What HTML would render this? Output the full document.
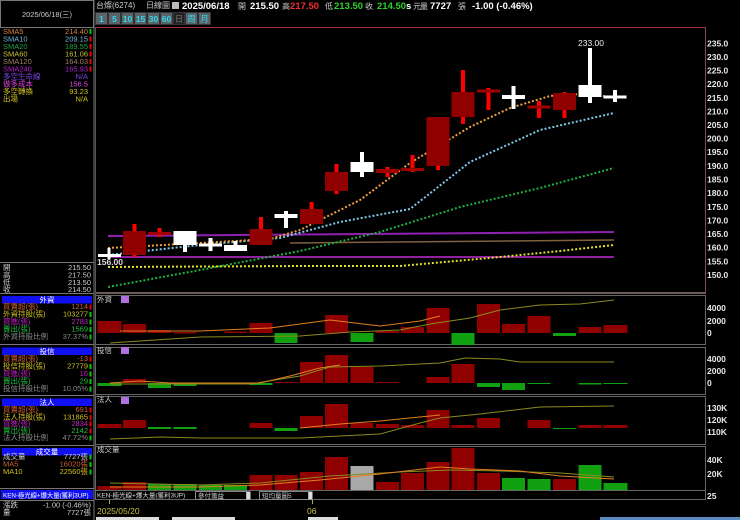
<!DOCTYPE html>
<html><head><meta charset="utf-8"><style>
html,body{margin:0;padding:0;background:#000;width:740px;height:520px;overflow:hidden}
svg text{font-family:"Liberation Sans","Noto Sans CJK TC",sans-serif}
.s{font-size:7.5px}
.ax{font-size:8.5px;font-weight:bold;fill:#e8e8e8}
</style></head><body>
<svg width="740" height="520" viewBox="0 0 740 520" xmlns="http://www.w3.org/2000/svg">
<rect width="740" height="520" fill="#000"/>
<g fill="none" stroke="#777" stroke-width="1">
<rect x="0.5" y="0.5" width="93" height="27"/>
<line x1="94" y1="0" x2="94" y2="520"/>
<line x1="0" y1="262.5" x2="94" y2="262.5"/>
<line x1="0" y1="293.5" x2="94" y2="293.5"/>
<line x1="0" y1="344.5" x2="94" y2="344.5"/>
<line x1="0" y1="395.5" x2="94" y2="395.5"/>
<line x1="0" y1="445.5" x2="94" y2="445.5"/>
<line x1="0" y1="488.5" x2="94" y2="488.5"/>
<line x1="0" y1="500.5" x2="94" y2="500.5"/>
</g>
<text x="47" y="17" class="s" fill="#ccc" text-anchor="middle">2025/06/18(三)</text>
<g class="s">
<text x="3" y="34" fill="#d08040">SMA5</text><text x="88" y="34" fill="#d08040" text-anchor="end">214.40</text>
<text x="3" y="41.5" fill="#70b8d8">SMA10</text><text x="88" y="41.5" fill="#70b8d8" text-anchor="end">209.15</text>
<text x="3" y="49" fill="#20a040">SMA20</text><text x="88" y="49" fill="#20a040" text-anchor="end">189.55</text>
<text x="3" y="56.5" fill="#c8c030">SMA60</text><text x="88" y="56.5" fill="#c8c030" text-anchor="end">161.06</text>
<text x="3" y="64" fill="#a08060">SMA120</text><text x="88" y="64" fill="#a08060" text-anchor="end">164.03</text>
<text x="3" y="71.5" fill="#b020d0">SMA240</text><text x="88" y="71.5" fill="#b020d0" text-anchor="end">165.93</text>
<text x="3" y="79" fill="#8040e0">多空生命線</text><text x="88" y="79" fill="#8040e0" text-anchor="end">N/A</text>
<text x="3" y="86.5" fill="#e040e0">做多成本</text><text x="88" y="86.5" fill="#e040e0" text-anchor="end">156.5</text>
<text x="3" y="94" fill="#d0c020">多空轉換</text><text x="88" y="94" fill="#d0c020" text-anchor="end">93.23</text>
<text x="3" y="101.5" fill="#d0c020">出場</text><text x="88" y="101.5" fill="#d0c020" text-anchor="end">N/A</text>
</g>
<g fill="#0c0"><rect x="89.5" y="29" width="2" height="5"/></g>
<g fill="#e00"><rect x="89.5" y="36.5" width="2" height="5"/><rect x="89.5" y="44" width="2" height="5"/><rect x="89.5" y="51.5" width="2" height="5"/><rect x="89.5" y="59" width="2" height="5"/><rect x="89.5" y="66.5" width="2" height="5"/></g>
<g class="s" fill="#ccc">
<text x="3" y="270">開</text><text x="91" y="270" text-anchor="end">215.50</text>
<text x="3" y="277.5">高</text><text x="91" y="277.5" text-anchor="end">217.50</text>
<text x="3" y="285">低</text><text x="91" y="285" text-anchor="end">213.50</text>
<text x="3" y="292">收</text><text x="91" y="292" text-anchor="end">214.50</text>
</g>
<g fill="#1010f0">
<rect x="2" y="296" width="90" height="7.5"/><rect x="2" y="347.5" width="90" height="7.5"/>
<rect x="2" y="398.5" width="90" height="7.5"/><rect x="2" y="448" width="90" height="7.5"/>
<rect x="1" y="490" width="92" height="9"/>
</g>
<g class="s" fill="#fff" text-anchor="middle">
<text x="47" y="302.5">外資</text><text x="47" y="354">投信</text><text x="47" y="405">法人</text><text x="47" y="454.5">成交量</text>
</g>
<text x="3" y="497.5" fill="#fff" style="font-size:6.3px">KEN-極光線+爆大量(獲利3UP)</text>
<g class="s">
<text x="3" y="309" fill="#d06030">買賣超(張)</text><text x="88" y="309" fill="#d06030" text-anchor="end">1214</text>
<text x="3" y="316.5" fill="#d0c020">外資持股(張)</text><text x="88" y="316.5" fill="#d0c020" text-anchor="end">103277</text>
<text x="3" y="324" fill="#c020c0">買進(張)</text><text x="88" y="324" fill="#c020c0" text-anchor="end">2783</text>
<text x="3" y="331.5" fill="#20c040">賣出(張)</text><text x="88" y="331.5" fill="#20c040" text-anchor="end">1569</text>
<text x="3" y="339" fill="#888">外資持股比例</text><text x="88" y="339" fill="#888" text-anchor="end">37.37%</text>

<text x="3" y="361" fill="#d06030">買賣超(張)</text><text x="88" y="361" fill="#d06030" text-anchor="end">-13</text>
<text x="3" y="368.5" fill="#d0c020">投信持股(張)</text><text x="88" y="368.5" fill="#d0c020" text-anchor="end">27779</text>
<text x="3" y="376" fill="#c020c0">買進(張)</text><text x="88" y="376" fill="#c020c0" text-anchor="end">16</text>
<text x="3" y="383.5" fill="#20c040">賣出(張)</text><text x="88" y="383.5" fill="#20c040" text-anchor="end">29</text>
<text x="3" y="391" fill="#888">投信持股比例</text><text x="88" y="391" fill="#888" text-anchor="end">10.05%</text>

<text x="3" y="412" fill="#d06030">買賣超(張)</text><text x="88" y="412" fill="#d06030" text-anchor="end">691</text>
<text x="3" y="419.5" fill="#d0c020">法人持股(張)</text><text x="88" y="419.5" fill="#d0c020" text-anchor="end">131865</text>
<text x="3" y="426" fill="#c020c0">買進(張)</text><text x="88" y="426" fill="#c020c0" text-anchor="end">2834</text>
<text x="3" y="433" fill="#20c040">賣出(張)</text><text x="88" y="433" fill="#20c040" text-anchor="end">2142</text>
<text x="3" y="440" fill="#888">法人持股比例</text><text x="88" y="440" fill="#888" text-anchor="end">47.72%</text>

<text x="3" y="459" fill="#ccc">成交量</text><text x="88" y="459" fill="#ccc" text-anchor="end">7727張</text>
<text x="3" y="466.5" fill="#d06030">MA5</text><text x="88" y="466.5" fill="#d06030" text-anchor="end">16020張</text>
<text x="3" y="474" fill="#d0c020">MA10</text><text x="88" y="474" fill="#d0c020" text-anchor="end">22560張</text>

<text x="3" y="507.5" fill="#ccc">漲跌</text><text x="91" y="507.5" fill="#ccc" text-anchor="end">-1.00 (-0.46%)</text>
<text x="3" y="515" fill="#ccc">量</text><text x="91" y="515" fill="#ccc" text-anchor="end">7727張</text>
</g>
<g>
<rect x="89.5" y="304.5" width="2" height="5" fill="#e00"/><rect x="89.5" y="312" width="2" height="5" fill="#0c0"/><rect x="89.5" y="319.5" width="2" height="5" fill="#0c0"/><rect x="89.5" y="327" width="2" height="5" fill="#0c0"/><rect x="89.5" y="334.5" width="2" height="5" fill="#0c0"/>
<rect x="89.5" y="356.5" width="2" height="5" fill="#e00"/><rect x="89.5" y="364" width="2" height="5" fill="#0c0"/><rect x="89.5" y="371.5" width="2" height="5" fill="#0c0"/><rect x="89.5" y="379" width="2" height="5" fill="#0c0"/><rect x="89.5" y="386.5" width="2" height="5" fill="#0c0"/>
<rect x="89.5" y="407.5" width="2" height="5" fill="#e00"/><rect x="89.5" y="415" width="2" height="5" fill="#e00"/><rect x="89.5" y="421.5" width="2" height="5" fill="#e00"/><rect x="89.5" y="428.5" width="2" height="5" fill="#e00"/><rect x="89.5" y="435.5" width="2" height="5" fill="#0c0"/>
<rect x="89.5" y="454.5" width="2" height="5" fill="#0c0"/><rect x="89.5" y="462" width="2" height="5" fill="#0c0"/><rect x="89.5" y="469.5" width="2" height="5" fill="#0c0"/>
</g>

<g style="font-size:8px" fill="#ccc">
<text x="96" y="8">台燦(6274)</text>
<text x="146" y="8">日線圖</text>
</g>
<rect x="172" y="2" width="7" height="7" fill="#bbb"/>
<g style="font-size:9.5px;font-weight:bold" fill="#fff">
<text x="182" y="9">2025/06/18</text>
<text x="250" y="9">215.50</text>
<text x="290" y="9" fill="#f03030">217.50</text>
<text x="334" y="9" fill="#30d030">213.50</text>
<text x="377" y="9" fill="#30d030">214.50</text>
<text x="406" y="9">s</text>
<text x="430" y="9">7727</text>
<text x="472" y="9">-1.00 (-0.46%)</text>
</g>
<g style="font-size:8px" fill="#ccc">
<text x="238" y="9">開</text><text x="282" y="9">高</text><text x="325" y="9">低</text><text x="365" y="9">收</text><text x="413" y="9">元</text><text x="420" y="9">量</text><text x="458" y="9">張</text>
</g>
<g fill="#5a6468" stroke="#333" stroke-width="1">
<rect x="95.5" y="12.5" width="12" height="12"/><rect x="108.5" y="12.5" width="12" height="12"/><rect x="121.5" y="12.5" width="12" height="12"/><rect x="134.5" y="12.5" width="12" height="12"/><rect x="147.5" y="12.5" width="12" height="12"/><rect x="160.5" y="12.5" width="12" height="12"/>
<rect x="173.5" y="12.5" width="11" height="12" fill="#222"/><rect x="185.5" y="12.5" width="12" height="12"/><rect x="198.5" y="12.5" width="12" height="12"/>
</g>
<g style="font-size:8.5px;font-weight:bold" fill="#30d8e8" text-anchor="middle">
<text x="101.5" y="22">1</text><text x="114.5" y="22">5</text><text x="127.5" y="22">10</text><text x="140.5" y="22">15</text><text x="153.5" y="22">30</text><text x="166.5" y="22">60</text>
<text x="179" y="22" fill="#555">日</text><text x="191.5" y="22" style="font-weight:normal">周</text><text x="204.5" y="22" style="font-weight:normal">月</text>
</g>

<line x1="95" y1="27.5" x2="705" y2="27.5" stroke="#a03040"/>
<line x1="705.5" y1="27" x2="705.5" y2="294" stroke="#7a4a5a"/>
<line x1="95.5" y1="27" x2="95.5" y2="500" stroke="#555"/>
<rect x="96" y="292" width="609" height="2" fill="#6a5a58"/>
<g class="ax">
<text x="707" y="46.5">235.0</text><text x="707" y="60">230.0</text><text x="707" y="73.5">225.0</text><text x="707" y="87">220.0</text><text x="707" y="101">215.0</text><text x="707" y="114.5">210.0</text><text x="707" y="128">205.0</text><text x="707" y="141.5">200.0</text><text x="707" y="155">195.0</text><text x="707" y="169">190.0</text><text x="707" y="182.5">185.0</text><text x="707" y="196">180.0</text><text x="707" y="210">175.0</text><text x="707" y="223.5">170.0</text><text x="707" y="237">165.0</text><text x="707" y="250.5">160.0</text><text x="707" y="264.5">155.0</text><text x="707" y="278">150.0</text>
</g>
<line x1="108" y1="236" x2="614" y2="232" stroke="#9020b0" stroke-width="2"/>
<line x1="108" y1="257" x2="614" y2="257" stroke="#9020a0" stroke-width="2"/>
<line x1="290" y1="243" x2="614" y2="240" stroke="#806040" stroke-width="1.5"/>
<g fill="none" stroke-width="2" stroke-dasharray="2,2">
<polyline stroke="#e0e030" points="108,267 300,266 400,266 500,257 560,251 614,245"/>
<polyline stroke="#20b040" points="108,287 200,270 300,251 380,232 460,207 540,188 614,168"/>
<polyline stroke="#80c8e8" points="108,255 200,245 280,238 340,222 410,209 470,162 540,130 614,113"/>
<polyline stroke="#f0a040" points="108,248 200,243 270,239 300,230 360,200 410,163 470,127 510,108 550,96 580,94 614,97"/>
</g>
<g>
<rect x="107.5" y="248" width="3" height="11" fill="#fff"/><rect x="98" y="254" width="23" height="3" fill="#fff"/>
<rect x="132.5" y="224" width="4" height="33" fill="#f00"/><rect x="123" y="231" width="23" height="24" fill="#900000"/>
<rect x="157.5" y="228" width="4" height="9" fill="#f00"/><rect x="148" y="232" width="23" height="3" fill="#a00000"/>
<rect x="183" y="231" width="4" height="21" fill="#fff"/><rect x="173.5" y="231" width="23" height="14" fill="#fff"/>
<rect x="208.5" y="238" width="4" height="13" fill="#fff"/><rect x="199" y="243.5" width="23" height="3" fill="#fff"/>
<rect x="233.5" y="241" width="4" height="10" fill="#fff"/><rect x="224" y="245" width="23" height="6" fill="#fff"/>
<rect x="259" y="217" width="4" height="28" fill="#f00"/><rect x="249.5" y="229" width="23" height="16" fill="#900000"/>
<rect x="284" y="211" width="4" height="17" fill="#fff"/><rect x="274.5" y="214" width="23" height="4" fill="#fff"/>
<rect x="309.5" y="202" width="4" height="22" fill="#f00"/><rect x="300" y="209" width="23" height="15" fill="#900000"/>
<rect x="334.5" y="164" width="4" height="30" fill="#f00"/><rect x="325" y="172" width="23" height="19" fill="#900000"/>
<rect x="360" y="152" width="4" height="25" fill="#fff"/><rect x="350.5" y="162" width="23" height="10" fill="#fff"/>
<rect x="385.5" y="167" width="4" height="10" fill="#f00"/><rect x="376" y="169" width="23" height="4" fill="#a00000"/>
<rect x="410.5" y="155" width="4" height="17" fill="#f00"/><rect x="401" y="168" width="23" height="3" fill="#a00000"/>
<rect x="436" y="117" width="4" height="53" fill="#f00"/><rect x="426.5" y="117" width="23" height="49" fill="#900000"/>
<rect x="461" y="70" width="4" height="54" fill="#f00"/><rect x="451.5" y="92" width="23" height="25" fill="#900000"/>
<rect x="486.5" y="88" width="4" height="22" fill="#f00"/><rect x="477" y="89.5" width="23" height="3" fill="#a00000"/>
<rect x="511.5" y="86" width="4" height="23" fill="#fff"/><rect x="502" y="95" width="23" height="4" fill="#fff"/>
<rect x="537" y="101" width="4" height="17" fill="#f00"/><rect x="527.5" y="105.5" width="23" height="3" fill="#a00000"/>
<rect x="562.5" y="92" width="4" height="26" fill="#f00"/><rect x="553" y="93" width="23" height="17" fill="#900000"/>
<rect x="588" y="48" width="4" height="55" fill="#fff"/><rect x="578.5" y="85" width="23" height="12" fill="#fff"/>
<rect x="613" y="90" width="4" height="12" fill="#fff"/><rect x="603.5" y="95.5" width="23" height="3" fill="#fff"/>
</g>
<text x="578" y="46" style="font-size:8.5px" fill="#eee">233.00</text>
<text x="97" y="265" style="font-size:8.5px;font-weight:bold" fill="#ddd">156.00</text>

<g fill="none" stroke="#666">
<rect x="95.5" y="295.5" width="610" height="49"/>
<rect x="95.5" y="347.5" width="610" height="47"/>
<rect x="95.5" y="396.5" width="610" height="48"/>
<rect x="95.5" y="446.5" width="610" height="44"/>
<rect x="95.5" y="490.5" width="610" height="9"/>
</g>
<g class="s" fill="#ccc">
<text x="97" y="302">外資</text><text x="97" y="353">投信</text><text x="97" y="402">法人</text><text x="97" y="452">成交量</text>
</g>
<g fill="#b070e0"><rect x="121" y="296" width="8" height="7"/><rect x="121" y="347" width="8" height="7"/><rect x="121" y="397" width="8" height="7"/></g>
<g class="ax">
<text x="707" y="311">4000</text><text x="707" y="324">2000</text><text x="707" y="336">0</text>
<text x="707" y="362">4000</text><text x="707" y="374">2000</text><text x="707" y="386">0</text>
<text x="707" y="411">130K</text><text x="707" y="423">120K</text><text x="707" y="435">110K</text>
<text x="707" y="463">40K</text><text x="707" y="477">20K</text><text x="707" y="499">25</text>
</g>
<g fill="#900000">
<rect x="97.5" y="321" width="24" height="12"/><rect x="123" y="324" width="23" height="9"/><rect x="148" y="330" width="23" height="3"/><rect x="173.5" y="332" width="23" height="1.5"/><rect x="224" y="331.5" width="23" height="1.5"/><rect x="249.5" y="323" width="23" height="10"/><rect x="325" y="315" width="23" height="18"/><rect x="376" y="331" width="23" height="2"/><rect x="401" y="327" width="23" height="6"/><rect x="426.5" y="308" width="23" height="25"/><rect x="477" y="304" width="23" height="29"/><rect x="502" y="324" width="23" height="9"/><rect x="527.5" y="316" width="23" height="17"/><rect x="578.5" y="327" width="23" height="6"/><rect x="603.5" y="325" width="24" height="8"/>
</g>
<g fill="#10a010"><rect x="274.5" y="333" width="23" height="10"/><rect x="350.5" y="333" width="23" height="9"/><rect x="451.5" y="333" width="23" height="12"/><rect x="553" y="333" width="23" height="3"/></g>
<polyline fill="none" stroke="#8a8a20" stroke-width="1" points="110,343 200,337 300,336 350,332 400,330 430,324 470,318 500,310 540,305 580,304 614,300"/>
<polyline fill="none" stroke="#e08020" stroke-width="1" points="120,331 200,331 270,328 330,320 380,326 420,321 440,316"/>
<g fill="#900000"><rect x="123" y="379" width="23" height="4"/><rect x="300" y="362" width="23" height="21"/><rect x="325" y="355" width="23" height="28"/><rect x="350.5" y="367" width="23" height="16"/><rect x="426.5" y="377" width="23" height="6"/><rect x="451.5" y="364" width="23" height="19"/><rect x="274.5" y="382" width="23" height="1"/><rect x="376" y="382" width="23" height="1"/></g>
<g fill="#10a010"><rect x="97.5" y="383" width="24" height="3"/><rect x="148" y="383" width="23" height="5"/><rect x="173.5" y="383" width="23" height="3"/><rect x="249.5" y="383" width="23" height="2"/><rect x="477" y="383" width="23" height="4"/><rect x="502" y="383" width="23" height="7"/><rect x="527.5" y="383" width="23" height="1"/><rect x="578.5" y="383" width="23" height="1.5"/><rect x="603.5" y="383" width="24" height="1"/></g>
<polyline fill="none" stroke="#8a8a20" stroke-width="1" points="110,384 250,384 300,376 330,367 380,366 440,363 465,358 500,359 520,362 560,362 614,362"/>
<polyline fill="none" stroke="#e08020" stroke-width="1" points="110,383 140,381 170,383 260,383 290,376 320,368 340,365"/>
<g fill="#900000"><rect x="97.5" y="424" width="24" height="4"/><rect x="123" y="420" width="23" height="8"/><rect x="249.5" y="423" width="23" height="5"/><rect x="300" y="416" width="23" height="12"/><rect x="325" y="404" width="23" height="24"/><rect x="350.5" y="423" width="23" height="5"/><rect x="376" y="424" width="23" height="4"/><rect x="401" y="425" width="23" height="3"/><rect x="426.5" y="410" width="23" height="18"/><rect x="451.5" y="425" width="23" height="3"/><rect x="477" y="418" width="23" height="10"/><rect x="527.5" y="420" width="23" height="8"/><rect x="578.5" y="425" width="23" height="3"/><rect x="603.5" y="425" width="24" height="3"/></g>
<g fill="#10a010"><rect x="148" y="427" width="23" height="2"/><rect x="173.5" y="427" width="23" height="2"/><rect x="274.5" y="428" width="23" height="3"/><rect x="553" y="428" width="23" height="1"/></g>
<polyline fill="none" stroke="#8a8a20" stroke-width="1" points="110,439 160,437 200,438 300,438 380,434 420,423 440,418 480,414 540,407 614,406"/>
<polyline fill="none" stroke="#e08020" stroke-width="1" points="300,428 340,424 380,421 440,415"/>
<g fill="#900000"><rect x="97.5" y="486" width="24" height="4"/><rect x="123" y="482" width="23" height="8"/><rect x="249.5" y="475" width="23" height="15"/><rect x="274.5" y="475" width="23" height="15"/><rect x="300" y="472" width="23" height="18"/><rect x="325" y="457" width="23" height="33"/><rect x="376" y="482" width="23" height="8"/><rect x="401" y="473" width="23" height="17"/><rect x="426.5" y="462" width="23" height="28"/><rect x="451.5" y="448" width="23" height="42"/><rect x="477" y="473" width="23" height="17"/><rect x="553" y="479" width="23" height="11"/></g>
<rect x="350.5" y="466" width="23" height="24" fill="#a8a8a8"/>
<g fill="#10a010"><rect x="148" y="484" width="23" height="6"/><rect x="173.5" y="484" width="23" height="6"/><rect x="199" y="485" width="23" height="5"/><rect x="224" y="485" width="23" height="5"/><rect x="502" y="478" width="23" height="12"/><rect x="527.5" y="479" width="23" height="11"/><rect x="578.5" y="465" width="23" height="25"/><rect x="603.5" y="483" width="24" height="7"/></g>
<polyline fill="none" stroke="#8a8a20" stroke-width="1" points="110,483 200,485 260,483 330,476 400,472 450,470 500,471 560,473 614,477"/>
<polyline fill="none" stroke="#e08020" stroke-width="1" points="110,487 200,487 260,485 320,480 380,474 440,467 470,469 520,471 560,476 614,479"/>
<text x="97" y="497.5" style="font-size:6.5px" fill="#ddd">KEN-極光線+爆大量(獲利3UP)</text>
<rect x="195.5" y="491.5" width="51" height="8" fill="#000" stroke="#888"/>
<text x="198" y="498" style="font-size:6.5px" fill="#ccc">參付籌益</text>
<rect x="246.5" y="491.5" width="4" height="8" fill="#ddd"/>
<rect x="259.5" y="491.5" width="49" height="8" fill="#000" stroke="#888"/>
<text x="262" y="498" style="font-size:6.5px" fill="#ccc">短均量圖5</text>
<rect x="308.5" y="491.5" width="4" height="8" fill="#ddd"/>
<line x1="109.5" y1="500" x2="109.5" y2="504" stroke="#b0b040"/>
<line x1="312.5" y1="500" x2="312.5" y2="504" stroke="#b0b040"/>
<text x="97" y="514" style="font-size:8.5px" fill="#c8c040">2025/05/20</text>
<text x="307" y="514" style="font-size:8.5px" fill="#c8c040">06</text>
<g fill="#ddd"><rect x="96" y="517" width="63" height="3"/><rect x="172" y="517" width="63" height="3"/><rect x="308" y="517" width="30" height="3"/></g>
<rect x="600" y="517" width="140" height="3" fill="#5a8ac0"/>
</svg>
</body></html>
